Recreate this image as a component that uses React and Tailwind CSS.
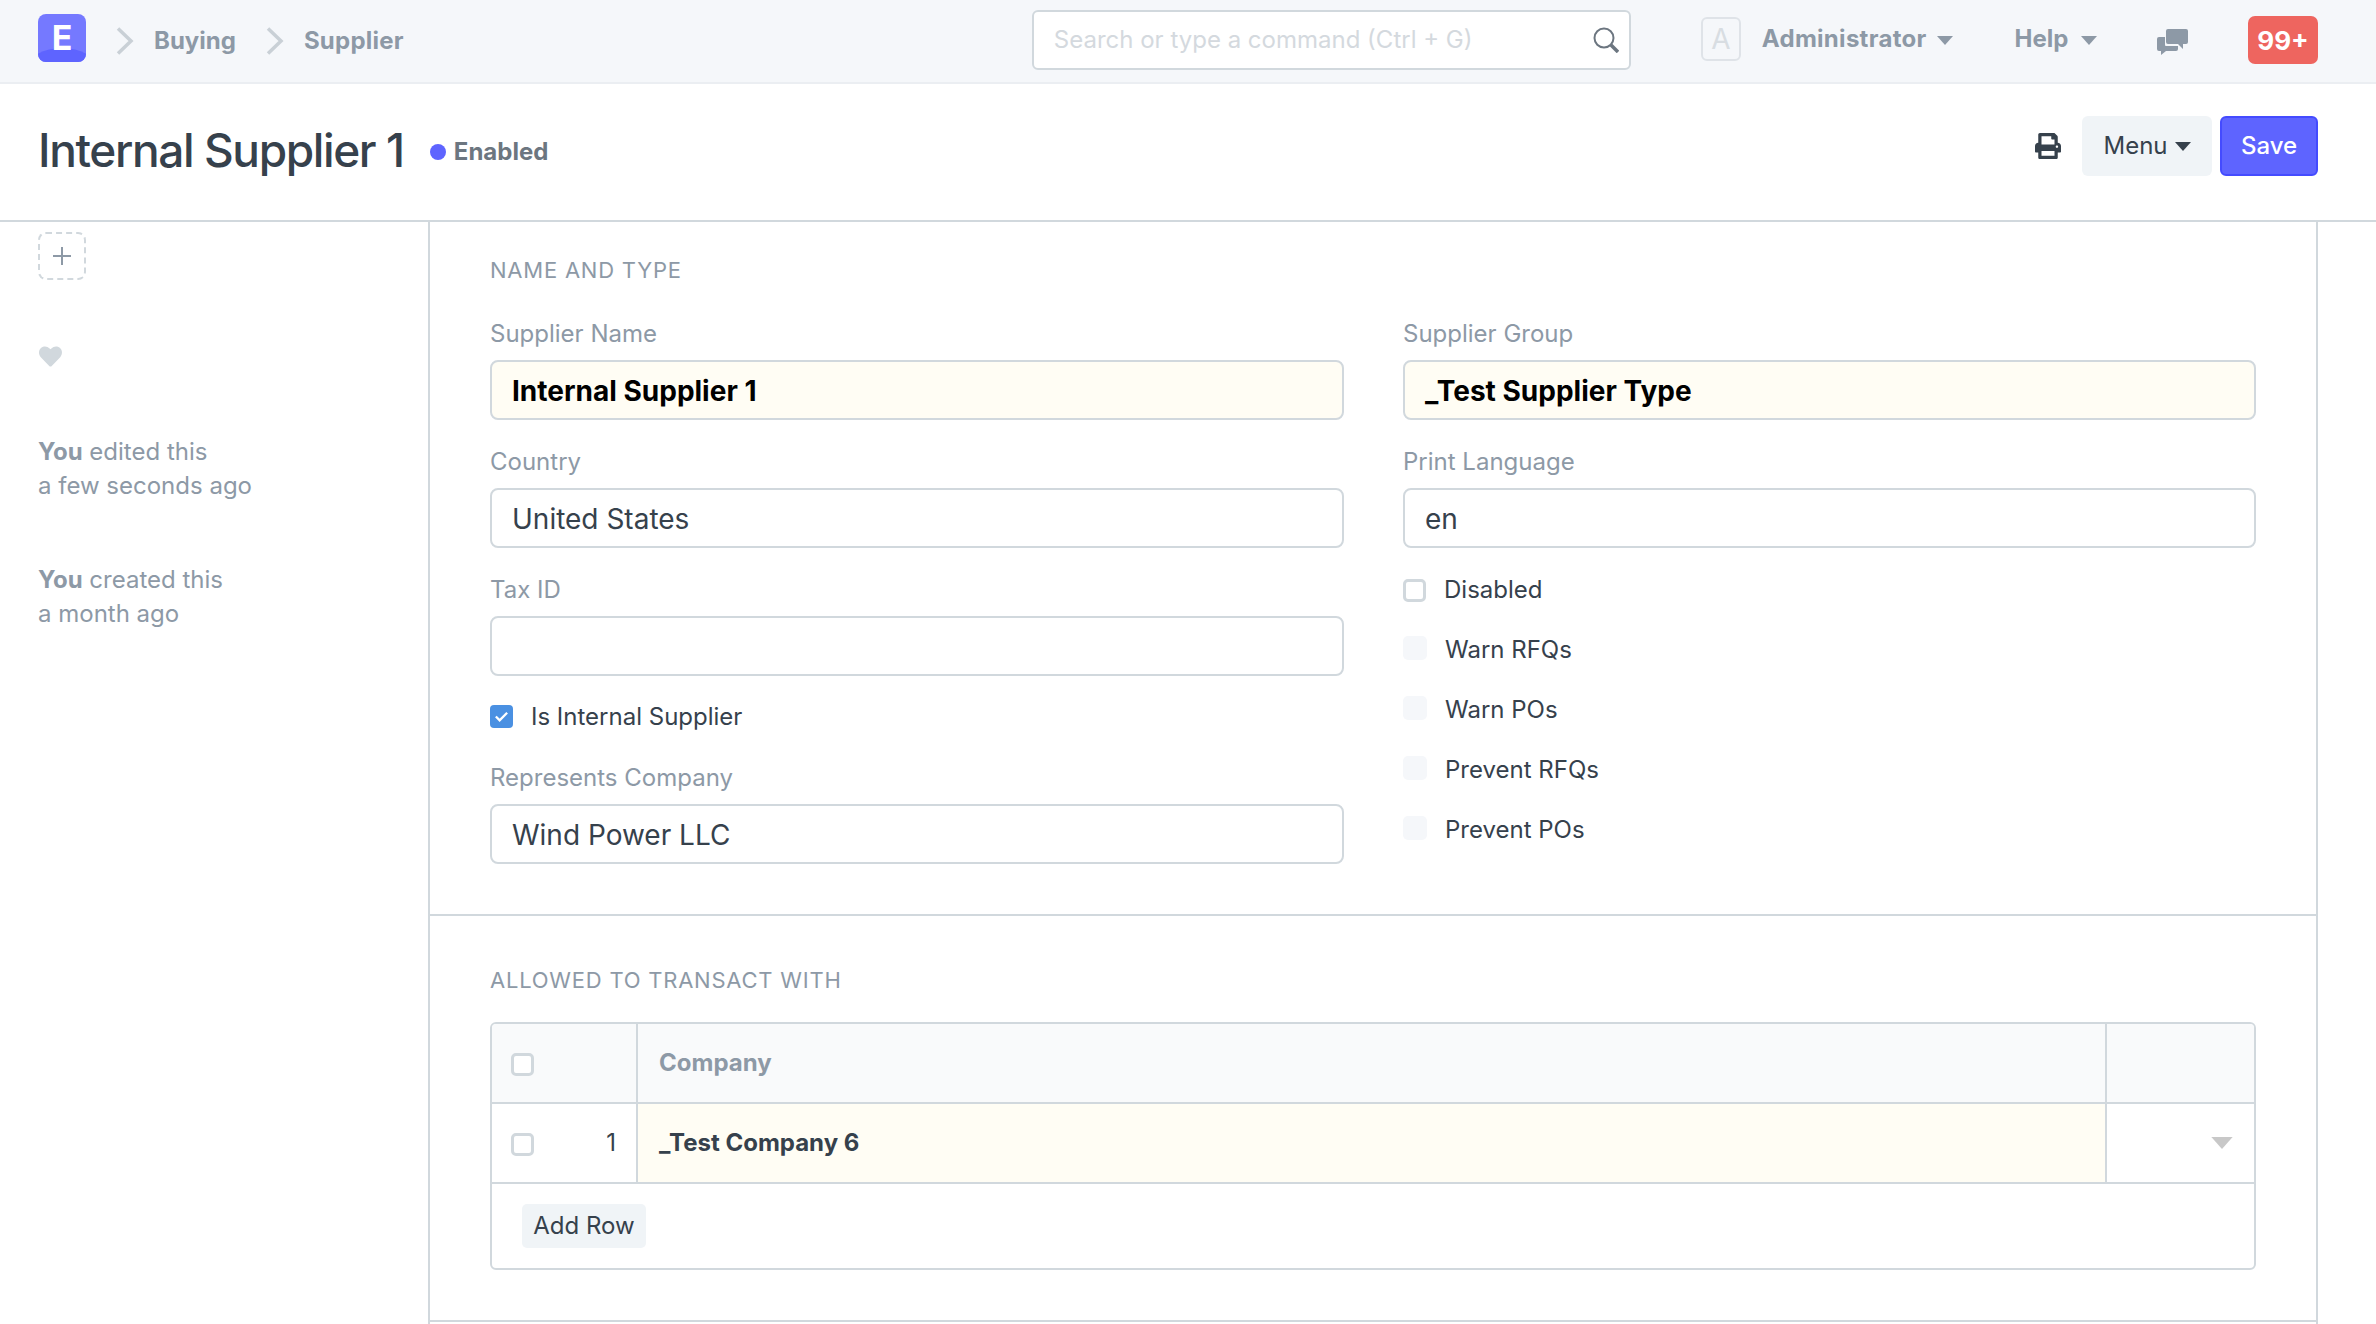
import React from "react";
import { FaPrint, FaHeart } from "react-icons/fa";

const Caret = ({ className }) => (
  <svg viewBox="0 0 16 9" className={className}><path d="M0 0h16L8 9z" fill="currentColor" /></svg>
);
const Chevron = ({ className }) => (
  <svg viewBox="0 0 18 28" className={"w-[18px] h-[28px] " + className} fill="none"><path d="M2 1.5l13 12.5L2 26.500" stroke="#c9d0d6" strokeWidth="3.5" /></svg>
);

const Field = ({ label, value, bold, yellow }) => (
  <div className="mb-[21px]">
    <div className="h-[40px] pt-[2px] mb-[7px] flex items-center text-[24px] text-[#8d99a6]">{label}</div>
    <div className={"h-[60px] border-2 border-[#d1d8dd] rounded-[8px] px-[20px] pt-[2px] flex items-center text-[28px] " + (yellow ? "bg-[#fffdf4] " : "bg-white ") + (bold ? "font-bold text-black" : "text-[#36414c]")}>
      {value}
    </div>
  </div>
);

const Box = ({ className = "" }) => (
  <span className={"block shrink-0 w-[23px] h-[23px] rounded-[5px] border-[3px] border-[#d1d8dd] bg-white " + className} />
);

const CheckRow = ({ label, first }) => (
  <div className={"h-[60px] pt-[2px] flex items-center text-[24px] text-[#36414c] " + (first ? "-mt-[10px]" : "")}>
    {first ? <Box /> : <span className="block shrink-0 w-[24px] h-[24px] -mt-[4px] rounded-[5px] bg-[#f5f7fa]" />}
    <span className="ml-[18px]">{label}</span>
  </div>
);

const SectionTitle = ({ children }) => (
  <div className="h-[36px] flex items-center text-[22px] tracking-[0.035em] text-[#8d99a6]">{children}</div>
);

export default function App() {
  return (
    <div className="w-[2376px] h-[1324px] overflow-hidden bg-white text-[#36414c] font-['Inter','Liberation_Sans',sans-serif]">
      {/* navbar */}
      <header className="h-[84px] bg-[#f5f7fa] border-b-2 border-[#ebeef2] flex items-center pl-[38px] pr-[58px]">
        <div className="relative w-[48px] h-[48px] -mt-[6px] rounded-[8px] overflow-hidden bg-[#7579ff] flex items-center justify-center">
          <span className="absolute left-[-10px] right-[-10px] top-[34px] h-[40px] rounded-[50%] bg-[#5e64ff]" />
          <span className="relative text-white text-[34px] font-bold leading-none">E</span>
        </div>
        <Chevron className="ml-[30px]" />
        <span className="ml-[20px] text-[24px] font-bold text-[#8d99a6]">Buying</span>
        <Chevron className="ml-[30px]" />
        <span className="ml-[20px] text-[24px] font-bold tracking-[0.01em] text-[#8d99a6]">Supplier</span>

        <div className="ml-[628px] w-[599px] h-[60px] -mt-[2px] rounded-[6px] border-2 border-[#d1d8dd] bg-white flex items-center pl-[20px] pr-[10px] text-[24px] text-[#d4d9de]">
          <span className="flex-1">Search or type a command (Ctrl + G)</span>
          <svg viewBox="0 0 26 26" className="w-[26px] h-[26px] text-[#6c7680]" fill="none" stroke="currentColor">
            <circle cx="11" cy="11" r="9.5" strokeWidth="2" />
            <path d="M18 18l7 7" strokeWidth="3.5" />
          </svg>
        </div>

        <div className="ml-[70px] w-[40px] h-[44px] -mt-[4px] rounded-[6px] border-2 border-[#dfe3e8] flex items-center justify-center text-[28px] text-[#d8dde2]">A</div>
        <span className="ml-[21px] -mt-[4px] text-[24px] font-bold tracking-[0.012em] text-[#8d99a6]">Administrator</span>
        <Caret className="ml-[10px] -mt-[2px] w-[16px] h-[9px] text-[#8d99a6]" />
        <span className="ml-[62px] -mt-[4px] text-[24px] font-bold text-[#8d99a6]">Help</span>
        <Caret className="ml-[13px] -mt-[2px] w-[16px] h-[9px] text-[#8d99a6]" />
        <svg viewBox="0 0 31 26" className="ml-[60px] w-[31px] h-[26px] mt-[2px] text-[#8d99a6]" fill="currentColor">
          <path d="M2 8h6v8a1 1 0 0 0 1 1h12v3a2 2 0 0 1-2 2H9l-5 4v-4H2a2 2 0 0 1-2-2V10a2 2 0 0 1 2-2z" />
          <path d="M11 0h18a2 2 0 0 1 2 2v11a2 2 0 0 1-2 2h-3v5l-5-5H11a2 2 0 0 1-2-2V2a2 2 0 0 1 2-2z" />
        </svg>
        <div className="ml-auto w-[70px] h-[48px] -mt-[2px] rounded-[7px] bg-[#ee655f] text-white text-[26px] font-bold flex items-center justify-center">99+</div>
      </header>

      {/* page head */}
      <div className="h-[138px] border-b-2 border-[#d1d8dd] flex items-center pl-[38px] pr-[58px]">
        <h1 className="text-[46px] font-medium tracking-[-0.03em] text-[#36414c] -mt-[4px]">Internal Supplier 1</h1>
        <span className="ml-[26px] w-[16px] h-[16px] rounded-full bg-[#5e64ff]" />
        <span className="ml-[8px] text-[24px] font-bold text-[#6c7680]">Enabled</span>
        <FaPrint className="ml-auto w-[26px] h-[26px] text-[#36414c] -mt-[12px]" />
        <div className="ml-[21px] w-[130px] h-[60px] rounded-[6px] bg-[#f0f4f7] flex items-center justify-center text-[24px] text-[#36414c] -mt-[12px]">
          Menu<Caret className="ml-[7px] w-[16px] h-[9px]" />
        </div>
        <div className="ml-[8px] w-[98px] h-[60px] rounded-[6px] bg-[#5e64ff] border-2 border-[#444bff] flex items-center justify-center text-[24px] font-medium text-white -mt-[12px]">Save</div>
      </div>

      <div className="flex">
        {/* sidebar */}
        <aside className="w-[428px] shrink-0 pl-[38px] text-[24px] text-[#8d99a6]">
          <div className="mt-[10px] w-[48px] h-[48px] rounded-[8px] border-2 border-dashed border-[#d1d8dd] flex items-center justify-center">
            <svg viewBox="0 0 20 20" className="w-[20px] h-[20px]" stroke="#8d99a6" strokeWidth="2"><path d="M10 1v18M1 10h18" /></svg>
          </div>
          <FaHeart className="mt-[65px] w-[25px] h-[23px] text-[#d1d8dd]" />
          <div className="mt-[67px] leading-[34px]">
            <div><b className="font-bold">You</b> edited this</div>
            <div>a few seconds ago</div>
          </div>
          <div className="mt-[60px] leading-[34px]">
            <div><b className="font-bold">You</b> created this</div>
            <div>a month ago</div>
          </div>
        </aside>

        {/* main */}
        <main className="w-[1890px] min-h-[1102px] shrink-0 border-x-2 border-[#d1d8dd]">
          <section className="h-[694px] border-b-2 border-[#d1d8dd] pt-[30px] px-[60px]">
            <SectionTitle>NAME AND TYPE</SectionTitle>
            <div className="mt-[25px] grid grid-cols-[854px_853px] gap-x-[59px]">
              <div>
                <Field label="Supplier Name" value="Internal Supplier 1" bold yellow />
                <Field label="Country" value="United States" />
                <Field label="Tax ID" value="" />
                <div className="h-[40px] -mt-[1px] mb-[21px] flex items-center text-[24px] text-[#36414c]">
                  <span className="w-[23px] h-[23px] rounded-[4px] bg-[#4a90e2] flex items-center justify-center">
                    <svg viewBox="0 0 16 16" className="w-[15px] h-[15px]" fill="none" stroke="#fff" strokeWidth="2.5"><path d="M2 8l4 4 8-8" /></svg>
                  </span>
                  <span className="ml-[18px] mt-[2px]">Is Internal Supplier</span>
                </div>
                <Field label="Represents Company" value="Wind Power LLC" />
              </div>
              <div>
                <Field label="Supplier Group" value="_Test Supplier Type" bold yellow />
                <Field label="Print Language" value="en" />
                <CheckRow label="Disabled" first />
                <CheckRow label="Warn RFQs" />
                <CheckRow label="Warn POs" />
                <CheckRow label="Prevent RFQs" />
                <CheckRow label="Prevent POs" />
              </div>
            </div>
          </section>

          <section className="h-[406px] border-b-2 border-[#d1d8dd] pt-[46px] px-[60px]">
            <SectionTitle>ALLOWED TO TRANSACT WITH</SectionTitle>
            <div className="mt-[24px] border-2 border-[#d1d8dd] rounded-[6px] overflow-hidden text-[24px]">
              <div className="h-[80px] flex bg-[#f9fafb] border-b-2 border-[#d1d8dd]">
                <div className="w-[146px] border-r-2 border-[#d1d8dd] pl-[19px] flex items-center"><Box className="mt-[2px]" /></div>
                <div className="flex-1 border-r-2 border-[#d1d8dd] pl-[21px] flex items-center font-bold text-[#8d99a6]">Company</div>
                <div className="w-[147px]" />
              </div>
              <div className="h-[80px] flex border-b-2 border-[#d1d8dd]">
                <div className="w-[146px] border-r-2 border-[#d1d8dd] pl-[19px] pr-[20px] flex items-center justify-between">
                  <Box className="mt-[2px]" /><span>1</span>
                </div>
                <div className="flex-1 border-r-2 border-[#d1d8dd] pl-[21px] flex items-center font-bold bg-[#fffdf4]">_Test Company 6</div>
                <div className="w-[147px] flex items-center justify-end pr-[20px]"><Caret className="w-[24px] h-[12px] text-[#c8c8c8]" /></div>
              </div>
              <div className="h-[84px] pl-[30px] pt-[20px]">
                <div className="w-[124px] h-[44px] rounded-[5px] bg-[#f0f4f7] flex items-center justify-center">Add Row</div>
              </div>
            </div>
          </section>
        </main>
      </div>
    </div>
  );
}
